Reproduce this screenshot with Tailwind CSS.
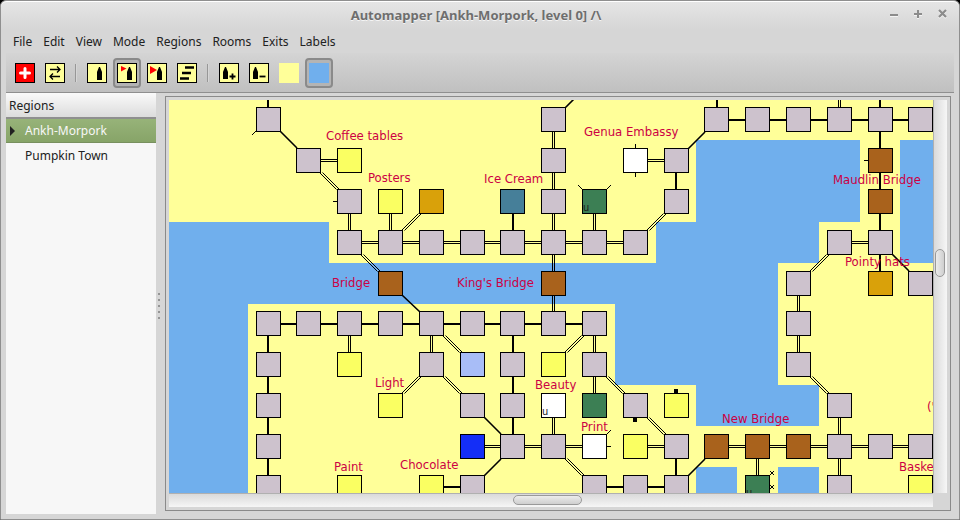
<!DOCTYPE html>
<html lang="en">
<head>
<meta charset="utf-8">
<title>Automapper [Ankh-Morpork, level 0]</title>
<script src="https://cdn.jsdelivr.net/npm/@tailwindcss/browser@4"></script>
</head>
<body class="h-screen overflow-hidden bg-black font-['Noto_Sans',sans-serif] text-xs text-[#212121]">
<div class="flex h-full flex-col rounded-t-md border border-[#8f8f8f] bg-[#d6d6d6]">
  <header class="relative flex h-7 shrink-0 items-center justify-center rounded-t-md border-t border-white bg-linear-to-b from-[#e5e5e5] to-[#d6d6d6] pr-2">
    <h1 class="text-[13px] font-bold text-[#6e6e6e] [text-shadow:0_1px_0_#f4f4f4]">Automapper [Ankh-Morpork, level 0] /\</h1>
    <div class="absolute top-1.5 right-[11px] flex gap-3 text-[#8c8c8c]">
      <button aria-label="Minimize" class="size-3"><svg viewBox="0 0 12 12" class="size-3" shape-rendering="crispEdges"><path d="M2 8h8" stroke="#f4f4f4" stroke-width="2"/><path d="M2 7h8" stroke="currentColor" stroke-width="2"/></svg></button>
      <button aria-label="Maximize" class="size-3"><svg viewBox="0 0 12 12" class="size-3" shape-rendering="crispEdges"><path d="M2 7h8M6 3v8" stroke="#f4f4f4" stroke-width="2"/><path d="M2 6h8M6 2v8" stroke="currentColor" stroke-width="2"/></svg></button>
      <button aria-label="Close" class="size-3"><svg viewBox="0 0 12 12" class="size-3"><path d="M3 3l7 7M10 3l-7 7" stroke="#f4f4f4" stroke-width="2.2"/><path d="M3 2l7 7M10 2l-7 7" stroke="currentColor" stroke-width="2.2"/></svg></button>
    </div>
  </header>

  <nav class="flex h-6 shrink-0 items-center gap-[11px] px-3 pt-0.5">
    <button>File</button><button>Edit</button><button>View</button><button>Mode</button><button>Regions</button><button>Rooms</button><button>Exits</button><button>Labels</button>
  </nav>

  <div role="toolbar" aria-label="Map tools" class="mx-[5px] flex h-10 shrink-0 items-center gap-0.5 border-b border-[#8f8f8f] bg-linear-to-b from-[#d4d4d4] to-[#c0c0c0] px-[5px]">
    <button aria-label="Center map" class="grid h-[30px] w-7 place-items-center"><svg viewBox="0 0 20 20" class="size-5"><rect x=".5" y=".5" width="19" height="19" fill="#f00" stroke="#000"/><path d="M10 5.500v9M5.500 10h9" stroke="#fff" stroke-width="3" stroke-linecap="round"/></svg></button>
    <button aria-label="Swap" class="grid h-[30px] w-7 place-items-center"><svg viewBox="0 0 20 20" class="size-5"><rect x=".5" y=".5" width="19" height="19" fill="#ff9" stroke="#000"/><path d="M5 6.500h9.500M12 3.500l3 3-3 3M15 13.500H5.500M8 10.500l-3 3 3 3" fill="none" stroke="#000" stroke-width="1.300"/></svg></button>
    <span class="mx-1 h-[18px] w-0.5 border-l border-r border-l-[#979797] border-r-[#d6d6d6]"></span>
    <button aria-label="Move mode" class="grid h-[30px] w-7 place-items-center"><svg viewBox="0 0 20 20" class="size-5"><rect x=".5" y=".5" width="19" height="19" fill="#ff9" stroke="#000"/><path d="M12 4h1l2 5v8h-5V9z"/></svg></button>
    <button aria-label="Update mode" aria-pressed="true" class="grid h-[30px] w-7 place-items-center rounded border-2 border-[#8a8a8a] bg-[#b4b4b4]"><svg viewBox="0 0 20 20" class="size-5"><rect x=".5" y=".5" width="19" height="19" fill="#ff9" stroke="#000"/><path d="M12 4h1l2 5v8h-5V9z"/><path d="M4 3l5.500 2.500L4 8.500z" fill="#f00"/></svg></button>
    <button aria-label="Create mode" class="grid h-[30px] w-7 place-items-center"><svg viewBox="0 0 20 20" class="size-5"><rect x=".5" y=".5" width="19" height="19" fill="#ff9" stroke="#000"/><path d="M12 4h1l2 5v8h-5V9z"/><path d="M3 3l7 4-7 4z" fill="#f00"/></svg></button>
    <button aria-label="Levels" class="grid h-[30px] w-7 place-items-center"><svg viewBox="0 0 20 20" class="size-5"><rect x=".5" y=".5" width="19" height="19" fill="#ff9" stroke="#000"/><path d="M8 4.500h9M5 10h9M3 15.500h9" stroke="#000" stroke-width="2.400"/></svg></button>
    <span class="mx-1 h-[18px] w-0.5 border-l border-r border-l-[#979797] border-r-[#d6d6d6]"></span>
    <button aria-label="Add room" class="grid h-[30px] w-7 place-items-center"><svg viewBox="0 0 20 20" class="size-5"><rect x=".5" y=".5" width="19" height="19" fill="#ff9" stroke="#000"/><path d="M6 4h1l2 5v7H4V9z"/><path d="M10.500 13.500h6M13.500 10.500v6" stroke="#000" stroke-width="1.800"/></svg></button>
    <button aria-label="Remove room" class="grid h-[30px] w-7 place-items-center"><svg viewBox="0 0 20 20" class="size-5"><rect x=".5" y=".5" width="19" height="19" fill="#ff9" stroke="#000"/><path d="M6 4h1l2 5v7H4V9z"/><path d="M10.500 13.500h6" stroke="#000" stroke-width="1.800"/></svg></button>
    <button aria-label="Land colour" class="grid h-[30px] w-7 place-items-center"><span class="size-5 bg-[#ffff99]"></span></button>
    <button aria-label="Water colour" aria-pressed="true" class="grid h-[30px] w-7 place-items-center rounded border-2 border-[#8a8a8a] bg-[#b4b4b4]"><span class="size-5 bg-[#70afed]"></span></button>
  </div>

  <main class="flex min-h-0 flex-1 px-[5px]">
    <aside class="mb-[5px] w-[150px] shrink-0 bg-[#f7f7f7]">
      <h2 class="flex h-[25px] items-center border-b border-[#8f8f8f] bg-linear-to-b from-[#fafafa] to-[#dcdcdc] px-[3px] pt-0.5">Regions</h2>
      <ul>
        <li><button class="flex h-[25px] w-full items-center border-y border-t-[#8f8f8f] border-b-[#78905f] bg-linear-to-b from-[#97b379] to-[#87a468] text-[#f7f7f7]"><svg viewBox="0 0 19 12" class="h-3 w-[19px]"><path d="M4 1l5 5-5 5z" fill="#212121"/></svg>Ankh-Morpork</button></li>
        <li><button class="flex h-[25px] w-full items-center pl-[19px]">Pumpkin Town</button></li>
      </ul>
    </aside>
    <div class="flex w-[9px] shrink-0 flex-col items-start justify-center gap-1 pl-0.5">
      <i class="h-0.5 w-0.5 bg-[#959595]"></i><i class="h-0.5 w-0.5 bg-[#959595]"></i><i class="h-0.5 w-0.5 bg-[#959595]"></i><i class="h-0.5 w-0.5 bg-[#959595]"></i><i class="h-0.5 w-0.5 bg-[#959595]"></i>
    </div>
    <section class="mt-[3px] mb-2 mr-[3px] grid min-w-0 flex-1 grid-cols-[minmax(0,1fr)_14px] grid-rows-[minmax(0,1fr)_14px] border border-[#8a8a8a] p-[3px]">
      <div class="overflow-hidden bg-[#ffff99]">
        <svg class="block size-full" role="img" aria-label="Map of Ankh-Morpork">
          <defs>
            <rect id="r" x=".5" y=".5" width="24" height="24" stroke="#000"/>
            <path id="dh" d="M308 160.500H349M635 160.500H676M349 242.500H635M839 242.500H880M472 446.500H594M635 446.500H676M716 446.500H940"/>
            <path id="dv" d="M349.500 201V242M349.500 323V364M390.500 201V242M553.500 119V323M553.500 405V446M594.500 201V242M594.500 323V405M431.500 323V364M798.500 283V364M839.500 90V119M839.500 405V500M757.500 446V487"/>
            <path id="dd" d="M321 172.500l17 17M362 254.500l17 17M403 230.500l17 -17M648 230.500l17 -17M811 271.500l17 -17M444 335.500l17 17M444 376.500l17 17M403 393.500l17 -17M566 352.500l17 -17M607 376.500l17 17M648 417.500l17 17M566 458.500l17 17M811 376.500l17 17"/>
          </defs>
          <g transform="translate(-169 -100)">
            <path fill="#70afed" shape-rendering="crispEdges" d="M169 222H329V263H656V222H696V140H860V222H819V263H778V385H819V426H696V385H615V304H248V493H169zM900 140H940V263H900zM696 467h41v26h-41zM778 467h41v26h-41z"/>
            <g stroke="#000" fill="none" shape-rendering="crispEdges">
              <path stroke-width="2" d="M716 120H920M268 324H594M431 487H472M594 487H676M268 90V119M268 323V500M676 160V201M513 201V242M513 323V446M717 90V119M880 90V283M676 446V487"/>
              <use href="#dh" y="-1"/><use href="#dh" y="1"/>
              <use href="#dv" x="-1"/><use href="#dv" x="1"/>
            </g>
            <g stroke="#000" fill="none">
              <path stroke-width="1.600" d="M280 131l17 17M402 295l18 17M565 108l12 -12M688 149l17 -17M892 254l17 17M484 417l17 17M484 476l17 -17M688 476l17 -17"/>
              <use href="#dd" x="-1.500"/><use href="#dd" x="1.500"/>
              <path d="M256 131l-4 4M578 185l4 4M611 185l-4 4M607 434l4 -4M770 471l4 4M774 471l-4 4M770 485l4 4M774 485l-4 4"/>
              <path d="M333 201.500h4M635.500 144v33M864 160.500h4M607 446.500h4"/>
              <path stroke-width="4" d="M635 418v4M676 389v4"/>
            </g>
            <g fill="#cdc2cd">
              <use href="#r" x="256" y="107"/><use href="#r" x="541" y="107"/><use href="#r" x="704" y="107"/><use href="#r" x="745" y="107"/><use href="#r" x="786" y="107"/><use href="#r" x="827" y="107"/><use href="#r" x="868" y="107"/><use href="#r" x="908" y="107"/>
              <use href="#r" x="296" y="148"/><use href="#r" x="541" y="148"/><use href="#r" x="664" y="148"/>
              <use href="#r" x="337" y="189"/><use href="#r" x="541" y="189"/><use href="#r" x="664" y="189"/>
              <use href="#r" x="337" y="230"/><use href="#r" x="378" y="230"/><use href="#r" x="419" y="230"/><use href="#r" x="460" y="230"/><use href="#r" x="500" y="230"/><use href="#r" x="541" y="230"/><use href="#r" x="582" y="230"/><use href="#r" x="623" y="230"/><use href="#r" x="827" y="230"/><use href="#r" x="868" y="230"/>
              <use href="#r" x="786" y="271"/><use href="#r" x="908" y="271"/>
              <use href="#r" x="256" y="311"/><use href="#r" x="296" y="311"/><use href="#r" x="337" y="311"/><use href="#r" x="378" y="311"/><use href="#r" x="419" y="311"/><use href="#r" x="460" y="311"/><use href="#r" x="500" y="311"/><use href="#r" x="541" y="311"/><use href="#r" x="582" y="311"/><use href="#r" x="786" y="311"/>
              <use href="#r" x="256" y="352"/><use href="#r" x="419" y="352"/><use href="#r" x="500" y="352"/><use href="#r" x="582" y="352"/><use href="#r" x="786" y="352"/>
              <use href="#r" x="256" y="393"/><use href="#r" x="460" y="393"/><use href="#r" x="500" y="393"/><use href="#r" x="623" y="393"/><use href="#r" x="827" y="393"/>
              <use href="#r" x="256" y="434"/><use href="#r" x="500" y="434"/><use href="#r" x="541" y="434"/><use href="#r" x="664" y="434"/><use href="#r" x="827" y="434"/><use href="#r" x="868" y="434"/><use href="#r" x="908" y="434"/>
              <use href="#r" x="256" y="475"/><use href="#r" x="460" y="475"/><use href="#r" x="582" y="475"/><use href="#r" x="623" y="475"/><use href="#r" x="664" y="475"/><use href="#r" x="827" y="475"/>
            </g>
            <g fill="#faff62">
              <use href="#r" x="337" y="148"/><use href="#r" x="378" y="189"/><use href="#r" x="337" y="352"/><use href="#r" x="541" y="352"/><use href="#r" x="378" y="393"/><use href="#r" x="664" y="393"/><use href="#r" x="623" y="434"/><use href="#r" x="337" y="475"/><use href="#r" x="419" y="475"/><use href="#r" x="908" y="475"/>
            </g>
            <g fill="#a9621c">
              <use href="#r" x="868" y="148"/><use href="#r" x="868" y="189"/><use href="#r" x="378" y="271"/><use href="#r" x="541" y="271"/><use href="#r" x="704" y="434"/><use href="#r" x="745" y="434"/><use href="#r" x="786" y="434"/>
            </g>
            <g fill="#fff"><use href="#r" x="623" y="148"/><use href="#r" x="541" y="393"/><use href="#r" x="582" y="434"/></g>
            <g fill="#3c7f54"><use href="#r" x="582" y="189"/><use href="#r" x="582" y="393"/><use href="#r" x="745" y="475"/></g>
            <g fill="#d9a10a"><use href="#r" x="419" y="189"/><use href="#r" x="868" y="271"/></g>
            <use href="#r" x="500" y="189" fill="#467f99"/>
            <use href="#r" x="460" y="352" fill="#a8bdf7"/>
            <use href="#r" x="460" y="434" fill="#142ef7"/>
            <g class="font-['DejaVu_Sans_Condensed','DejaVu_Sans',sans-serif] text-[13px]" fill="#cc0044">
              <text x="326" y="140">Coffee tables</text>
              <text x="368" y="182">Posters</text>
              <text x="484" y="183">Ice Cream</text>
              <text x="584" y="136">Genua Embassy</text>
              <text x="833" y="184">Maudlin Bridge</text>
              <text x="845" y="266">Pointy hats</text>
              <text x="332" y="287">Bridge</text>
              <text x="457" y="287">King's Bridge</text>
              <text x="375" y="387">Light</text>
              <text x="535" y="389">Beauty</text>
              <text x="581" y="431">Print</text>
              <text x="722" y="423">New Bridge</text>
              <text x="334" y="471">Paint</text>
              <text x="400" y="469">Chocolate</text>
              <text x="899" y="471">Baskets</text>
              <text x="927" y="411">("</text>
            </g>
            <g class="font-['DejaVu_Sans_Condensed','DejaVu_Sans',sans-serif] text-[11px]" fill="#1c1c1c">
              <text x="583" y="211">u</text><text x="542" y="415">u</text><text x="746" y="496">u</text>
            </g>
          </g>
        </svg>
      </div>
      <div class="relative border-l border-[#b0b0b0] bg-linear-to-r from-[#dadada] to-[#f6f6f6]"><span class="absolute top-[38%] left-px h-7 w-2.5 rounded-[5px] border border-[#999] bg-linear-to-r from-[#ececec] to-[#cfcfcf]"></span></div>
      <div class="relative border-t border-[#b0b0b0] bg-linear-to-b from-[#dadada] to-[#f6f6f6]"><span class="absolute top-px left-[45%] h-2.5 w-[69px] rounded-[5px] border border-[#999] bg-linear-to-b from-[#ececec] to-[#cfcfcf]"></span></div>
    </section>
  </main>
</div>
</body>
</html>
